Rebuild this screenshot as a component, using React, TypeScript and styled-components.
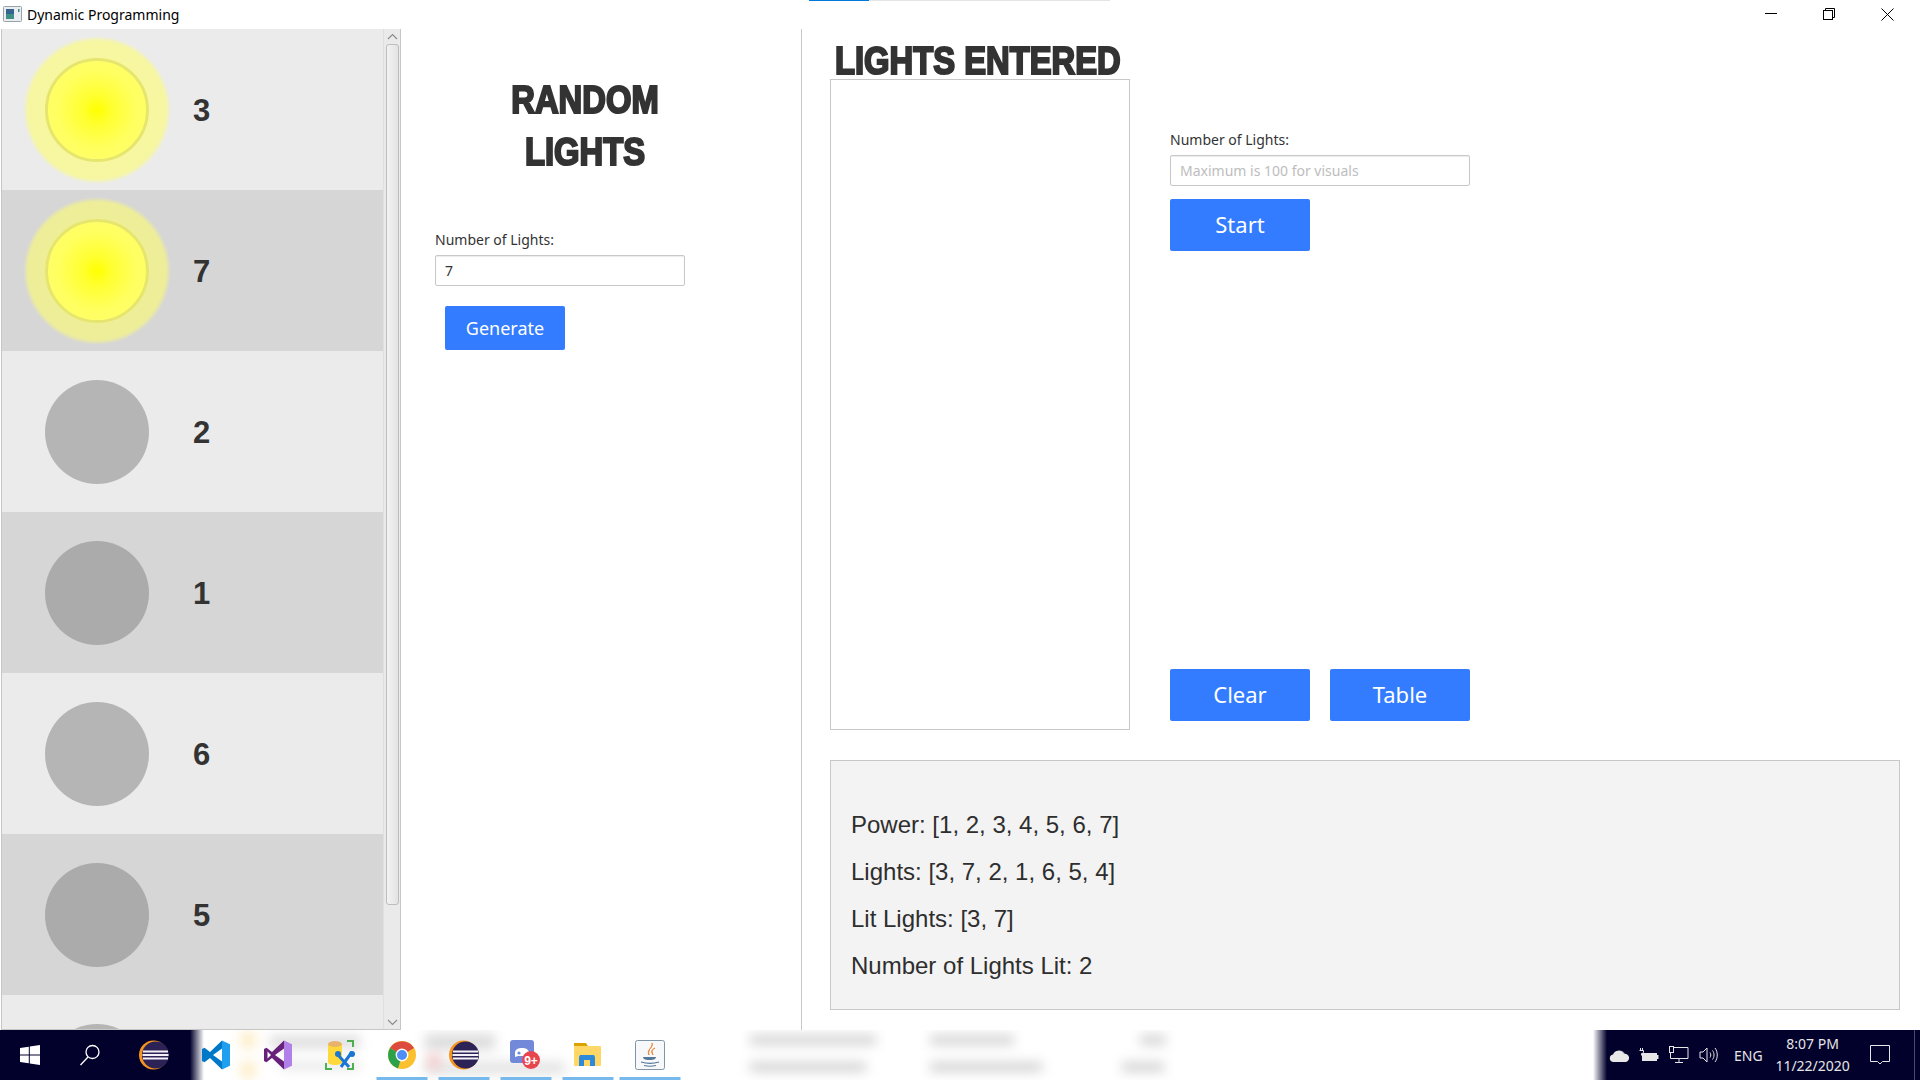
import React from 'react';
import styled, { createGlobalStyle } from 'styled-components';

const GlobalStyle = createGlobalStyle`
  html, body { margin: 0; padding: 0; background: #fff; }
  body { font-family: "Noto Sans", "Open Sans", sans-serif; color: #333; }
  * { box-sizing: border-box; }
`;

const Page = styled.div`
  width: 1920px;
  height: 1080px;
  display: flex;
  flex-direction: column;
  overflow: hidden;
  background: #fff;
`;

/* title bar */
const TitleBar = styled.div`
  position: relative;
  height: 29px;
  flex: none;
  display: flex;
  align-items: center;
  padding: 0 0 1px 3px;
`;
const TitleText = styled.span`
  margin-left: 5px;
  font-size: 14px;
  color: #000;
`;
const TaskProgress = styled.div`
  position: absolute;
  left: 809px;
  top: 0;
  width: 301px;
  height: 1px;
  background: linear-gradient(to right, #0078d7 60px, #e4e4e4 60px);
`;
const WindowControls = styled.div`
  margin-left: auto;
  display: flex;
  align-items: center;
  gap: 46px;
  padding-right: 26px;
`;

/* main area */
const Main = styled.div`
  flex: 1;
  display: flex;
  min-height: 0;
`;

const ListPanel = styled.div`
  width: 400px;
  flex: none;
  display: flex;
  margin-left: 1px;
  border-left: 1px solid #c6c6c6;
  border-right: 1px solid #c6c6c6;
  border-bottom: 1px solid #c6c6c6;
  overflow: hidden;
`;
const Rows = styled.div`
  width: 381px;
  flex: none;
`;
const Row = styled.div<{ $alt: boolean }>`
  height: 161px;
  display: flex;
  align-items: center;
  padding-left: 21px;
  background: ${(p) => (p.$alt ? '#d6d6d6' : '#ebebeb')};
`;
const Halo = styled.div<{ $lit: boolean }>`
  width: 148px;
  height: 148px;
  flex: none;
  border-radius: 50%;
  display: flex;
  align-items: center;
  justify-content: center;
  background: ${(p) =>
    p.$lit
      ? 'radial-gradient(circle closest-side, rgba(255,255,110,.6) 70%, rgba(255,255,110,.58) 93%, rgba(255,255,110,0) 100%)'
      : 'transparent'};
`;
const Core = styled.div<{ $lit: boolean }>`
  width: 104px;
  height: 104px;
  border-radius: 50%;
  ${(p) =>
    p.$lit
      ? `border: 3px solid #e6e66e;
         background: radial-gradient(circle closest-side, #ffff00 0%, #ffff30 30%, #ffff60 80%, #ffff66 100%);`
      : `background: rgba(128,128,128,.5);
         filter: blur(.7px);`}
`;
const RowNumber = styled.span`
  margin: 2px 0 0 22px;
  font-family: "Liberation Sans", Arial, sans-serif;
  font-weight: 700;
  font-size: 31px;
  color: #333;
`;

const ScrollBar = styled.div`
  flex: 1;
  display: flex;
  flex-direction: column;
  align-items: center;
  background: #eaeaea;
  border-left: 1px solid #e0e0e0;
`;
const ScrollArrow = styled.div`
  height: 14px;
  flex: none;
  display: flex;
  align-items: center;
  justify-content: center;
`;
const ScrollThumb = styled.div`
  width: 13px;
  height: 861px;
  margin: 1px 0 auto;
  border: 1px solid #bdbdbd;
  border-radius: 3px;
  background: linear-gradient(to right, #f3f3f3, #e9e9e9 60%, #e2e2e2);
`;

const RandomPanel = styled.div`
  width: 401px;
  flex: none;
  border-right: 1px solid #c8c8c8;
  padding: 45px 0 0 34px;
`;
const HeadingWrap = styled.h1<{ $center?: boolean }>`
  margin: 0;
  font-family: "Liberation Sans", Arial, sans-serif;
  font-weight: 700;
  font-size: 39px;
  line-height: 52px;
  color: #333;
  -webkit-text-stroke: 2.2px #333;
  white-space: nowrap;
  text-align: ${(p) => (p.$center ? 'center' : 'left')};
`;
const HeadingLine = styled.span<{ $center?: boolean }>`
  display: block;
  transform: scaleX(0.84);
  transform-origin: ${(p) => (p.$center ? 'center' : 'left')};
`;
const RandomHeadingBox = styled.div`
  width: 300px;
`;
const FieldLabel = styled.label`
  display: block;
  font-size: 14px;
  line-height: 20px;
  color: #333;
`;
const RandomField = styled.div`
  margin-top: 52px;
  width: 250px;
`;
const TextInput = styled.input`
  display: block;
  width: 100%;
  height: 31px;
  margin-top: 5px;
  padding: 0 9px;
  font-family: inherit;
  font-size: 14px;
  color: #333;
  background: #fff;
  border: 1px solid #c8c8c8;
  border-radius: 2px;
  outline: none;
  box-shadow: inset 0 1px 1px rgba(0, 0, 0, 0.08);
  &::placeholder { color: #bdbdbd; opacity: 1; }
`;
const BlueButton = styled.button<{ $small?: boolean }>`
  display: block;
  width: ${(p) => (p.$small ? '120px' : '140px')};
  height: ${(p) => (p.$small ? '44px' : '52px')};
  padding: ${(p) => (p.$small ? '0' : '0 0 2px')};
  border: 0;
  border-radius: 2px;
  background: #337cff;
  color: #fff;
  font-family: inherit;
  font-size: ${(p) => (p.$small ? '18px' : '22px')};
`;
const GenerateWrap = styled.div`
  margin: 20px 0 0 10px;
`;

const WorkPanel = styled.div`
  flex: 1;
  min-width: 0;
  padding: 0 20px 0 28px;
  display: flex;
  flex-direction: column;
`;
const HeadingRow = styled.div`
  height: 50px;
  padding: 6px 0 0 5px;
`;
const WorkRow = styled.div`
  display: flex;
  gap: 40px;
  height: 651px;
  flex: none;
`;
const EnteredBox = styled.div`
  width: 300px;
  flex: none;
  border: 1px solid #c8c8c8;
  background: #fff;
`;
const FormColumn = styled.div`
  width: 300px;
  display: flex;
  flex-direction: column;
  padding: 51px 0 9px;
`;
const StartWrap = styled.div`
  margin-top: 13px;
`;
const ButtonRow = styled.div`
  margin-top: auto;
  display: flex;
  gap: 20px;
`;
const InfoPanel = styled.div`
  margin-top: 30px;
  height: 250px;
  flex: none;
  padding: 40px 20px 0;
  background: #f3f3f3;
  border: 1px solid #c8c8c8;
`;
const InfoLine = styled.p`
  margin: 0;
  font-family: "Liberation Sans", Arial, sans-serif;
  font-size: 24px;
  line-height: 47px;
  color: #2e2e2e;
`;

/* taskbar */
const Taskbar = styled.div`
  position: relative;
  height: 50px;
  flex: none;
  display: flex;
  background: #fff;
  overflow: hidden;
`;
const Smudge = styled.div<{ $x: number; $y: number; $w: number; $h: number; $c: string }>`
  position: absolute;
  left: ${(p) => p.$x}px;
  top: ${(p) => p.$y}px;
  width: ${(p) => p.$w}px;
  height: ${(p) => p.$h}px;
  background: ${(p) => p.$c};
  filter: blur(6px);
`;
const DarkStart = styled.div`
  position: relative;
  width: 204px;
  flex: none;
  display: flex;
  align-items: center;
  background: linear-gradient(to right, #02012c 190px, #fff 204px);
`;
const IconSlot = styled.div<{ $w?: number }>`
  position: relative;
  width: ${(p) => p.$w ?? 62}px;
  height: 50px;
  flex: none;
  display: flex;
  align-items: center;
  justify-content: center;
`;
const AppIcons = styled.div`
  position: relative;
  display: flex;
  margin-left: -19px;
`;
const RunningLine = styled.div<{ $w?: number }>`
  position: absolute;
  bottom: 0;
  left: 50%;
  transform: translateX(-50%);
  width: ${(p) => p.$w ?? 51}px;
  height: 3px;
  background: #76b9ed;
`;
const Tray = styled.div`
  position: relative;
  margin-left: auto;
  width: 327px;
  flex: none;
  display: flex;
  align-items: center;
  padding-left: 11px;
  color: #e6e6e6;
  background: linear-gradient(to right, #fff 0, #02012c 14px);
`;
const TrayIcon = styled.div`
  width: 30px;
  display: flex;
  justify-content: center;
`;
const TrayLang = styled.span`
  margin-left: 10px;
  font-size: 14px;
`;
const Clock = styled.div`
  width: 86px;
  margin-left: 7px;
  text-align: center;
  font-size: 14px;
  line-height: 22px;
`;
const NoticeSlot = styled.div`
  margin-left: 14px;
  display: flex;
`;
const ShowDesktop = styled.div`
  margin-left: auto;
  margin-right: 5px;
  width: 1px;
  height: 50px;
  background: #4a4a66;
`;

/* drawings */
const AppGlyph = () => (
  <svg width="19" height="17" viewBox="0 0 19 17">
    <rect x="0.5" y="0.5" width="18" height="15" rx="1" fill="#e9edf0" stroke="#9aa3a8" />
    <rect x="3" y="3" width="8" height="10" fill="#3f8f86" />
    <rect x="3" y="3" width="8" height="5" fill="#35658f" />
    <rect x="15" y="3" width="1.5" height="3" fill="#3f8f86" />
  </svg>
);
const MinimizeGlyph = () => (
  <svg width="12" height="12" viewBox="0 0 12 12">
    <path d="M0 5.5h12" stroke="#000" strokeWidth="1" />
  </svg>
);
const RestoreGlyph = () => (
  <svg width="12" height="12" viewBox="0 0 12 12" fill="none" stroke="#000">
    <rect x="0.5" y="2.5" width="9" height="9" />
    <path d="M2.5 2.5V0.5h9v9H9.5" />
  </svg>
);
const CloseGlyph = () => (
  <svg width="13" height="13" viewBox="0 0 13 13" stroke="#000" strokeWidth="1">
    <path d="M0.5 0.5l12 12M12.5 0.5l-12 12" />
  </svg>
);
const Chevron = ({ up }: { up?: boolean }) => (
  <svg width="11" height="7" viewBox="0 0 11 7" fill="none" stroke="#8c8c8c" strokeWidth="1.2">
    <path d={up ? 'M1 6l4.500-4.500L10 6' : 'M1 1l4.500 4.500L10 1'} />
  </svg>
);
const WindowsLogo = () => (
  <svg width="20" height="20" viewBox="0 0 20 20" fill="#fff">
    <path d="M0 3l8.800-1.300v7.700H0zM9.800 1.600L20 0v9.400H9.800zM0 10.500h8.800v7.800L0 17zM9.800 10.500H20V20L9.800 18.400z" />
  </svg>
);
const SearchGlyph = () => (
  <svg width="22" height="22" viewBox="0 0 22 22" fill="none" stroke="#fff" strokeWidth="1.3">
    <circle cx="13.5" cy="8" r="6.5" />
    <path d="M9 13L1.500 21" />
  </svg>
);
const EclipseIcon = () => (
  <svg width="30" height="30" viewBox="0 0 30 30">
    <circle cx="14.5" cy="15" r="14.5" fill="#f7941e" />
    <circle cx="16.5" cy="15" r="13.5" fill="#2c2255" />
    <rect x="4" y="10.5" width="25" height="2" fill="#f4f2f8" />
    <rect x="3.500" y="14" width="26" height="2" fill="#f4f2f8" />
    <rect x="4" y="17.5" width="25" height="2" fill="#f4f2f8" />
  </svg>
);
const VsCodeIcon = () => (
  <svg width="30" height="30" viewBox="0 0 30 30">
    <path d="M21 0.500L9 12 3.500 7.800 1 9v12l2.500 1.200L9 18l12 11.500V21.500L12 15l9-6.500z" fill="#0078c8" />
    <path d="M21 0.500l8 3.800v21.400l-8 3.800z" fill="#1f9ff0" />
  </svg>
);
const VisualStudioIcon = () => (
  <svg width="30" height="30" viewBox="0 0 30 30">
    <path d="M21 0.500L9 12 3.500 7.800 1 9v12l2.500 1.200L9 18l12 11.500V21.500L12 15l9-6.500zM4.500 11.500L8 15l-3.500 3.500z" fill="#68217a" fillRule="evenodd" />
    <path d="M21 0.500l8 3.800v21.400l-8 3.800z" fill="#b180e8" />
  </svg>
);
const DataToolIcon = () => (
  <svg width="30" height="30" viewBox="0 0 30 30">
    <path d="M3 4v18c0 2 3 3 7 3s7-1 7-3V4z" fill="#ffd93b" />
    <ellipse cx="10" cy="4" rx="7" ry="3" fill="#e8b26a" />
    <path d="M22 1h6v6M1 23v6h6M28 23v6h-6" fill="none" stroke="#4caf50" strokeWidth="2" />
    <path d="M13 15l11 12M27 12l-11 15" stroke="#1976d2" strokeWidth="3" fill="none" />
    <circle cx="13" cy="14" r="3" fill="#1976d2" />
    <circle cx="27" cy="14" r="3" fill="#1976d2" />
  </svg>
);
const ChromeIcon = () => (
  <svg width="28" height="28" viewBox="0 0 28 28">
    <circle cx="14" cy="14" r="14" fill="#fbc02d" />
    <path d="M14 14L2 7A14 14 0 0 1 26.100 7z" fill="#dd4b3e" />
    <path d="M14 14L2 7A14 14 0 0 0 10 27.400z" fill="#2ba14b" />
    <circle cx="14" cy="14" r="6.400" fill="#fff" />
    <circle cx="14" cy="14" r="5" fill="#4d8df5" />
  </svg>
);
const DiscordIcon = () => (
  <svg width="32" height="32" viewBox="0 0 32 32">
    <rect x="0" y="1" width="24" height="23" rx="3" fill="#7289da" />
    <path d="M5 13c1-3 3-4 7-4s6 1 7 4v5l-4-1H8l-3 1z" fill="#fff" />
    <circle cx="9" cy="14" r="1.600" fill="#7289da" />
    <circle cx="21" cy="21" r="9" fill="#e8464e" />
    <text x="21" y="25.500" textAnchor="middle" fontFamily="Liberation Sans, sans-serif" fontWeight="700" fontSize="12" fill="#fff">9+</text>
  </svg>
);
const FolderIcon = () => (
  <svg width="28" height="26" viewBox="0 0 28 26">
    <path d="M0 1h12l2 3H0z" fill="#d9a300" />
    <rect x="0" y="4" width="27" height="20" rx="1" fill="#ffd766" />
    <path d="M5 24v-9l1-2h14l1 2v9h-5v-6h-6v6z" fill="#2e8ad8" />
  </svg>
);
const JavaIcon = () => (
  <svg width="30" height="31" viewBox="0 0 30 31">
    <rect x="0.500" y="0.500" width="29" height="29" rx="2" fill="#f6f8fa" stroke="#8094a8" />
    <path d="M17 3c2 4-5 6-3 12-3-5 4-7 3-12zM20 8c-4 2-3 4-2 7-2-3-2-5 2-7z" fill="#ee7f2d" stroke="#ee7f2d" strokeWidth="0.8" />
    <path d="M8 17h13c0 1.500-1 3-6.500 3S8 18.500 8 17z" fill="#55789a" />
    <path d="M6 22c5 1.500 13 1.500 18 0M9 25.500c4 1 8 1 12 0" fill="none" stroke="#55789a" strokeWidth="1.200" />
  </svg>
);
const CloudGlyph = () => (
  <svg width="21" height="14" viewBox="0 0 21 14">
    <path d="M5 6a6 6 0 0 1 11 0z" fill="#9a9aa8" />
    <path d="M4 14a3.800 3.800 0 0 1 0-7.500A6 6 0 0 1 15 6a4 4 0 0 1 2 8z" fill="#e8e8e8" />
  </svg>
);
const BatteryGlyph = () => (
  <svg width="20" height="14" viewBox="0 0 20 14" fill="none" stroke="#e6e6e6">
    <path d="M1.500 0v2.500M3.500 0v2.500M0.500 2.500h4v1.500c0 1-1 1.500-2 1.500v2" />
    <rect x="3.500" y="5.500" width="14" height="7" fill="#e6e6e6" />
    <rect x="18" y="7.500" width="1" height="3" fill="#e6e6e6" />
  </svg>
);
const NetworkGlyph = () => (
  <svg width="20" height="18" viewBox="0 0 20 18" fill="none" stroke="#e6e6e6">
    <path d="M5 1.500h14v11H1.500V7M10 12.500v4M6 16.500h8" />
    <rect x="0.500" y="0.500" width="4" height="6" fill="#02012c" />
  </svg>
);
const VolumeGlyph = () => (
  <svg width="20" height="16" viewBox="0 0 20 16" fill="none" stroke="#e6e6e6">
    <path d="M1 5h3l4-4v14l-4-4H1zM11 5.500c1 1.500 1 3.500 0 5M13.500 3.500c2 2.500 2 6.500 0 9M16 1c3 4 3 10 0 14" />
  </svg>
);
const NoticeGlyph = () => (
  <svg width="20" height="20" viewBox="0 0 20 20" fill="none" stroke="#e6e6e6">
    <path d="M0.500 0.500h19v16h-7l-2.500 2.500-2.500-2.500h-7z" />
  </svg>
);

// the last row is scrolled almost out of view, only the top of its lamp shows
const rows = [
  { n: 3, lit: true },
  { n: 7, lit: true },
  { n: 2, lit: false },
  { n: 1, lit: false },
  { n: 6, lit: false },
  { n: 5, lit: false },
  { n: null, lit: false },
];

const blurred = [
  { x: 270, y: 6, w: 90, h: 12, c: '#dcdcdc' },
  { x: 240, y: 2, w: 16, h: 16, c: '#fdeec8' },
  { x: 240, y: 32, w: 16, h: 16, c: '#fdeec8' },
  { x: 280, y: 32, w: 80, h: 8, c: '#e6e6e6' },
  { x: 425, y: 4, w: 70, h: 16, c: '#dcdcdc' },
  { x: 425, y: 32, w: 140, h: 12, c: '#e2e2e2' },
  { x: 428, y: 24, w: 12, h: 14, c: '#f4c6c6' },
  { x: 750, y: 5, w: 126, h: 10, c: '#d4d4d4' },
  { x: 750, y: 32, w: 116, h: 10, c: '#d4d4d4' },
  { x: 930, y: 5, w: 84, h: 10, c: '#d4d4d4' },
  { x: 930, y: 32, w: 112, h: 10, c: '#d4d4d4' },
  { x: 1140, y: 5, w: 26, h: 10, c: '#d4d4d4' },
  { x: 1122, y: 32, w: 42, h: 10, c: '#d4d4d4' },
];

export default function App() {
  return (
    <Page>
      <GlobalStyle />
      <TitleBar>
        <AppGlyph />
        <TitleText>Dynamic Programming</TitleText>
        <TaskProgress />
        <WindowControls>
          <MinimizeGlyph />
          <RestoreGlyph />
          <CloseGlyph />
        </WindowControls>
      </TitleBar>

      <Main>
        <ListPanel>
          <Rows>
            {rows.map((r, i) => (
              <Row key={i} $alt={i % 2 === 1}>
                <Halo $lit={r.lit}>
                  <Core $lit={r.lit} />
                </Halo>
                {r.n !== null && <RowNumber>{r.n}</RowNumber>}
              </Row>
            ))}
          </Rows>
          <ScrollBar>
            <ScrollArrow><Chevron up /></ScrollArrow>
            <ScrollThumb />
            <ScrollArrow><Chevron /></ScrollArrow>
          </ScrollBar>
        </ListPanel>

        <RandomPanel>
          <RandomHeadingBox>
            <HeadingWrap $center>
              <HeadingLine $center>RANDOM</HeadingLine>
              <HeadingLine $center>LIGHTS</HeadingLine>
            </HeadingWrap>
          </RandomHeadingBox>
          <RandomField>
            <FieldLabel>Number of Lights:</FieldLabel>
            <TextInput defaultValue="7" />
          </RandomField>
          <GenerateWrap>
            <BlueButton $small>Generate</BlueButton>
          </GenerateWrap>
        </RandomPanel>

        <WorkPanel>
          <HeadingRow>
            <HeadingWrap>
              <HeadingLine>LIGHTS ENTERED</HeadingLine>
            </HeadingWrap>
          </HeadingRow>
          <WorkRow>
            <EnteredBox />
            <FormColumn>
              <FieldLabel>Number of Lights:</FieldLabel>
              <TextInput placeholder="Maximum is 100 for visuals" />
              <StartWrap>
                <BlueButton>Start</BlueButton>
              </StartWrap>
              <ButtonRow>
                <BlueButton>Clear</BlueButton>
                <BlueButton>Table</BlueButton>
              </ButtonRow>
            </FormColumn>
          </WorkRow>
          <InfoPanel>
            <InfoLine>Power: [1, 2, 3, 4, 5, 6, 7]</InfoLine>
            <InfoLine>Lights: [3, 7, 2, 1, 6, 5, 4]</InfoLine>
            <InfoLine>Lit Lights: [3, 7]</InfoLine>
            <InfoLine>Number of Lights Lit: 2</InfoLine>
          </InfoPanel>
        </WorkPanel>
      </Main>

      <Taskbar>
        {blurred.map((b, i) => (
          <Smudge key={i} $x={b.x} $y={b.y} $w={b.w} $h={b.h} $c={b.c} />
        ))}
        <DarkStart>
          <IconSlot $w={60}><WindowsLogo /></IconSlot>
          <IconSlot $w={60}><SearchGlyph /></IconSlot>
          <IconSlot $w={68}><EclipseIcon /></IconSlot>
        </DarkStart>
        <AppIcons>
          <IconSlot><VsCodeIcon /></IconSlot>
          <IconSlot><VisualStudioIcon /></IconSlot>
          <IconSlot><DataToolIcon /></IconSlot>
          <IconSlot><ChromeIcon /><RunningLine /></IconSlot>
          <IconSlot><EclipseIcon /><RunningLine /></IconSlot>
          <IconSlot><DiscordIcon /><RunningLine /></IconSlot>
          <IconSlot><FolderIcon /><RunningLine /></IconSlot>
          <IconSlot><JavaIcon /><RunningLine $w={61} /></IconSlot>
        </AppIcons>
        <Tray>
          <TrayIcon><CloudGlyph /></TrayIcon>
          <TrayIcon><BatteryGlyph /></TrayIcon>
          <TrayIcon><NetworkGlyph /></TrayIcon>
          <TrayIcon><VolumeGlyph /></TrayIcon>
          <TrayLang>ENG</TrayLang>
          <Clock>
            8:07 PM
            <br />
            11/22/2020
          </Clock>
          <NoticeSlot><NoticeGlyph /></NoticeSlot>
          <ShowDesktop />
        </Tray>
      </Taskbar>
    </Page>
  );
}
